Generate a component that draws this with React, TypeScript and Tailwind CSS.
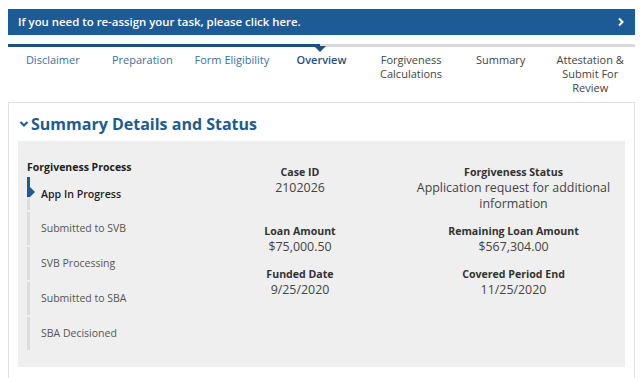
const tabs = [
  { label: "Disclaimer", state: "done" },
  { label: "Preparation", state: "done" },
  { label: "Form Eligibility", state: "done" },
  { label: "Overview", state: "active" },
  { label: "Forgiveness Calculations", state: "todo" },
  { label: "Summary", state: "todo" },
  { label: "Attestation & Submit For Review", state: "todo" },
];

const steps = [
  "App In Progress",
  "Submitted to SVB",
  "SVB Processing",
  "Submitted to SBA",
  "SBA Decisioned",
];

const details = [
  { label: "Case ID", value: "2102026" },
  { label: "Forgiveness Status", value: "Application request for additional information" },
  { label: "Loan Amount", value: "$75,000.50" },
  { label: "Remaining Loan Amount", value: "$567,304.00" },
  { label: "Funded Date", value: "9/25/2020" },
  { label: "Covered Period End", value: "11/25/2020" },
];

export default function App() {
  return (
    <div className="w-[643px] h-[378px] overflow-hidden bg-white px-2 pt-[9px] font-['Open_Sans',sans-serif]">
      <div className="flex h-[26px] items-center justify-between bg-[#1d5b96] pl-[10px] pr-[10px] text-[11.4px] font-semibold text-white">
        <span>If you need to re-assign your task, please click here.</span>
        <svg width="8" height="10" viewBox="0 0 8 10">
          <path d="M2 1.5 L5.5 5 L2 8.5" fill="none" stroke="white" strokeWidth="2" />
        </svg>
      </div>

      <div className="relative mt-[9px] flex h-[3px]">
        <div className="w-[312px] bg-[#1f4f7d]" />
        <div className="flex-1 bg-[#dadada]" />
        <div className="absolute left-[306px] top-[2px] h-0 w-0 border-x-[6px] border-t-[6px] border-x-transparent border-t-[#1f4f7d]" />
      </div>

      <div className="grid grid-cols-7 pt-[6px] text-center text-[11px] leading-[14px]">
        {tabs.map((t) => (
          <div
            key={t.label}
            className={
              t.state === "active"
                ? "px-1 font-semibold text-[#1f4f7d]"
                : t.state === "done"
                ? "px-1 text-[#3a6f9f]"
                : "px-[10px] text-[#444]"
            }
          >
            {t.label}
          </div>
        ))}
      </div>

      <div className="mt-[7px] border border-[#e3e3e3] px-[9px] pb-3">
        <div className="flex h-[38px] items-center gap-[2px] pl-[1px] pt-[3px]">
          <svg width="10" height="8" viewBox="0 0 10 8">
            <path d="M1.5 2 L5 5.5 L8.5 2" fill="none" stroke="#1f5b8e" strokeWidth="2" />
          </svg>
          <h2 className="text-[16px] font-bold text-[#1f5b8e]">Summary Details and Status</h2>
        </div>

        <div className="flex h-[226px] bg-[#efefef]">
          <div className="w-[172px] pl-[9px] pt-[19px]">
            <div className="text-[10.5px] font-bold leading-[14px] text-[#222]">Forgiveness Process</div>
            <div className="mt-[3px] flex flex-col gap-[2px]">
              {steps.map((s, i) => (
                <Step key={s} label={s} active={i === 0} />
              ))}
            </div>
          </div>
          <div className="grid flex-1 grid-cols-[220px_1fr] content-start gap-y-[12px] pt-[24px] pr-[8px] text-center">
            {details.map((d) => (
              <div key={d.label}>
                <div className="text-[10.6px] font-bold leading-[15px] text-[#333]">{d.label}</div>
                <div className="text-[12.4px] leading-[16px] text-[#444]">{d.value}</div>
              </div>
            ))}
          </div>
        </div>
      </div>
    </div>
  );
}

function Step({ label, active }: { label: string; active: boolean }) {
  return (
    <div className="relative flex h-[33px] items-center pl-[14px]">
      <div className="absolute left-0 top-0 h-full w-[3px] bg-[#dcdcdc]" />
      {active && (
        <>
          <div className="absolute left-0 top-0 h-[20px] w-[3px] bg-[#1f5b8e]" />
          <div className="absolute left-[3px] top-[10px] h-0 w-0 border-y-[5px] border-l-[5px] border-y-transparent border-l-[#1f5b8e]" />
        </>
      )}
      <span className={active ? "pt-[2px] text-[10.6px] font-semibold text-[#222]" : "text-[10.5px] text-[#555]"}>
        {label}
      </span>
    </div>
  );
}
